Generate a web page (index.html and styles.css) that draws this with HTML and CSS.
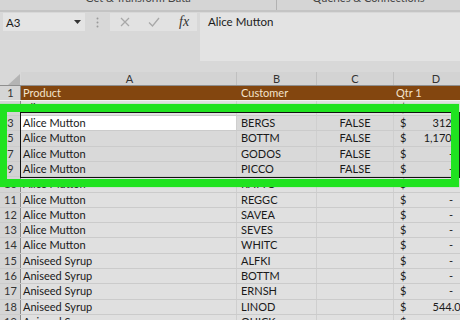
FILE: index.html
```html
<!DOCTYPE html>
<html>
<head>
    <title>Alice Mutton - Excel</title>
    <link rel="stylesheet" href="styles.css">
</head>
<body>
    <div class="ribbon">
        <div class="group group-get">Get &amp; Transform Data</div>
        <div class="group group-queries">Queries &amp; Connections</div>
    </div>

    <div class="fbar">
        <div class="namebox">
            <span>A3</span>
            <svg class="arrow" width="7" height="4" viewBox="0 0 7 4"><polygon points="0,0 7,0 3.5,4" fill="#333"/></svg>
        </div>
        <div class="dots">
            <svg width="3" height="11" viewBox="0 0 3 11"><circle cx="1.5" cy="1.5" r="1" fill="#9a9a9a"/><circle cx="1.5" cy="5.5" r="1" fill="#9a9a9a"/><circle cx="1.5" cy="9.5" r="1" fill="#9a9a9a"/></svg>
        </div>
        <div class="fxbtns">
            <svg class="btn" width="10" height="10" viewBox="0 0 10 10"><path d="M1 1 L9 9 M9 1 L1 9" stroke="#a8a8a8" stroke-width="1.3" fill="none"/></svg>
            <svg class="btn" width="12" height="10" viewBox="0 0 12 10"><path d="M1 5.5 L4.5 9 L11 1" stroke="#a8a8a8" stroke-width="1.3" fill="none"/></svg>
            <span class="fx">fx</span>
        </div>
        <div class="finput">Alice Mutton</div>
    </div>

    <div class="sheet">
        <div class="colhead">
            <div class="rh corner">
                <svg width="12" height="11" viewBox="0 0 12 11"><polygon points="12,0 12,11 0,11" fill="#b4b4b4"/></svg>
            </div>
            <div class="a">A</div>
            <div class="b">B</div>
            <div class="c">C</div>
            <div class="d">D</div>
        </div>

        <div class="row head">
            <div class="rh">1</div>
            <div class="a">Product</div>
            <div class="b">Customer</div>
            <div class="c"></div>
            <div class="d">Qtr 1</div>
        </div>
        <div class="row">
            <div class="rh">2</div>
            <div class="a">Alice Mutton</div>
            <div class="b">ANTON</div>
            <div class="c"></div>
            <div class="d money"><span>$</span><span class="dash">-</span></div>
        </div>
        <div class="row sel">
            <div class="rh">3</div>
            <div class="a active">Alice Mutton</div>
            <div class="b">BERGS</div>
            <div class="c">FALSE</div>
            <div class="d money"><span>$</span><span class="num">312.00</span></div>
        </div>
        <div class="row sel">
            <div class="rh">5</div>
            <div class="a">Alice Mutton</div>
            <div class="b">BOTTM</div>
            <div class="c">FALSE</div>
            <div class="d money"><span>$</span><span class="num">1,170.00</span></div>
        </div>
        <div class="row sel">
            <div class="rh">7</div>
            <div class="a">Alice Mutton</div>
            <div class="b">GODOS</div>
            <div class="c">FALSE</div>
            <div class="d money"><span>$</span><span class="dash">-</span></div>
        </div>
        <div class="row sel">
            <div class="rh">9</div>
            <div class="a">Alice Mutton</div>
            <div class="b">PICCO</div>
            <div class="c">FALSE</div>
            <div class="d money"><span>$</span><span class="dash">-</span></div>
        </div>
        <div class="row">
            <div class="rh">10</div>
            <div class="a">Alice Mutton</div>
            <div class="b">RATTC</div>
            <div class="c"></div>
            <div class="d money"><span>$</span><span class="dash">-</span></div>
        </div>
        <div class="row">
            <div class="rh">11</div>
            <div class="a">Alice Mutton</div>
            <div class="b">REGGC</div>
            <div class="c"></div>
            <div class="d money"><span>$</span><span class="dash">-</span></div>
        </div>
        <div class="row">
            <div class="rh">12</div>
            <div class="a">Alice Mutton</div>
            <div class="b">SAVEA</div>
            <div class="c"></div>
            <div class="d money"><span>$</span><span class="dash">-</span></div>
        </div>
        <div class="row">
            <div class="rh">13</div>
            <div class="a">Alice Mutton</div>
            <div class="b">SEVES</div>
            <div class="c"></div>
            <div class="d money"><span>$</span><span class="dash">-</span></div>
        </div>
        <div class="row">
            <div class="rh">14</div>
            <div class="a">Alice Mutton</div>
            <div class="b">WHITC</div>
            <div class="c"></div>
            <div class="d money"><span>$</span><span class="dash">-</span></div>
        </div>
        <div class="row">
            <div class="rh">15</div>
            <div class="a">Aniseed Syrup</div>
            <div class="b">ALFKI</div>
            <div class="c"></div>
            <div class="d money"><span>$</span><span class="dash">-</span></div>
        </div>
        <div class="row">
            <div class="rh">16</div>
            <div class="a">Aniseed Syrup</div>
            <div class="b">BOTTM</div>
            <div class="c"></div>
            <div class="d money"><span>$</span><span class="dash">-</span></div>
        </div>
        <div class="row">
            <div class="rh">17</div>
            <div class="a">Aniseed Syrup</div>
            <div class="b">ERNSH</div>
            <div class="c"></div>
            <div class="d money"><span>$</span><span class="dash">-</span></div>
        </div>
        <div class="row">
            <div class="rh">18</div>
            <div class="a">Aniseed Syrup</div>
            <div class="b">LINOD</div>
            <div class="c"></div>
            <div class="d money"><span>$</span><span class="num">544.00</span></div>
        </div>
        <div class="row">
            <div class="rh">19</div>
            <div class="a">Aniseed Syrup</div>
            <div class="b">QUICK</div>
            <div class="c"></div>
            <div class="d money"><span>$</span><span class="dash">-</span></div>
        </div>
    </div>

    <!-- selected range and the green marker drawn over it -->
    <div class="selection"></div>
    <div class="highlight"></div>
</body>
</html>
```

FILE: styles.css
```css
body {
    margin: 0;
    width: 460px;
    height: 320px;
    overflow: hidden;
    position: relative;
    background-color: #d8d8d8;
    font-family: Lato, "Liberation Sans", sans-serif;
    font-size: 11px;
    color: #1a1a1a;
}

.ribbon {
    display: flex;
    height: 10px;
    overflow: hidden;
    background-color: #d5d5d5;
    border-bottom: 2px solid #c4c4c4;
}

.group {
    text-align: center;
    line-height: 11px;
    margin-top: -8px;
    color: #444;
    white-space: nowrap;
}

.group-get {
    width: 281px;
    border-right: 1px solid #b2b2b2;
}

.group-queries {
    width: 186px;
}

.fbar {
    display: flex;
    align-items: flex-start;
    height: 60px;
    padding: 1px 0 0 3px;
    box-sizing: border-box;
}

.namebox {
    width: 82px;
    height: 18px;
    box-sizing: border-box;
    background-color: #e4e4e4;
    display: flex;
    align-items: center;
    justify-content: space-between;
    padding: 0 4px 0 3px;
    font-size: 11.5px;
}

.dots {
    width: 25px;
    height: 18px;
    display: flex;
    align-items: center;
    justify-content: center;
}

.fxbtns {
    width: 87px;
    height: 18px;
    background-color: #e2e2e2;
    display: flex;
    align-items: center;
    padding-left: 10px;
    box-sizing: border-box;
}

.fxbtns .btn {
    margin-right: 18px;
}

.fx {
    font-family: "Liberation Serif", serif;
    font-style: italic;
    font-size: 14px;
    color: #333;
    margin-left: 1px;
}

.finput {
    flex: 1;
    margin-left: 3px;
    height: 48px;
    background-color: #e3e3e3;
    padding: 2px 0 0 8px;
    box-sizing: border-box;
    font-size: 11.5px;
}

.sheet {
    width: 478px;
    background-color: #e0e0e0;
}

.colhead,
.row {
    display: flex;
}

.colhead {
    height: 13.5px;
    box-sizing: border-box;
    background-color: #d3d3d3;
    border-bottom: 1px solid #8f8f8f;
    line-height: 13px;
    color: #333;
}

.colhead > div {
    text-align: center;
}

.corner {
    display: flex;
    align-items: flex-end;
    justify-content: flex-end;
    padding-right: 1px;
}

.row {
    height: 15.3px;
    box-sizing: border-box;
    border-bottom: 1px solid #cbcbcb;
    line-height: 14px;
    white-space: nowrap;
}

.rh {
    width: 21px;
    flex-shrink: 0;
    box-sizing: border-box;
    background-color: #d5d5d5;
    border-right: 1px solid #8a8a8a;
    padding-left: 1px;
    text-align: center;
    color: #333;
}

.colhead .rh {
    border-right: none;
    background-color: #d8d8d8;
}

.a {
    width: 215px;
    padding-left: 2px;
    box-sizing: border-box;
}

.b {
    width: 80px;
    padding-left: 4px;
    box-sizing: border-box;
    border-left: 1px solid #cfcfcf;
}

.c {
    width: 77px;
    text-align: center;
    border-left: 1px solid #cfcfcf;
    box-sizing: border-box;
}

.d {
    width: 85px;
    padding-left: 2px;
    box-sizing: border-box;
    border-left: 1px solid #cfcfcf;
}

.colhead .b,
.colhead .c,
.colhead .d {
    border-left: 1px solid #c0c0c0;
    padding-left: 0;
}

.money {
    display: flex;
    justify-content: space-between;
    padding-left: 6px;
}

.num {
    padding-right: 11px;
}

.dash {
    padding-right: 25px;
}

.head {
    background-color: #83460f;
    color: #f3e3cc;
    border-bottom: 1px solid #f2f2f2;
}

.head .b,
.head .c,
.head .d {
    border-left-color: #83460f;
}

.head .rh {
    color: #333;
}

.sel {
    background-color: #d9d9d9;
}

.sel .rh {
    background-color: #d3d3d3;
}

.active {
    background-color: #fff;
}

.selection {
    position: absolute;
    left: 20px;
    top: 112px;
    width: 440px;
    height: 66px;
    box-sizing: border-box;
    border: 1px solid #111;
}

.highlight {
    position: absolute;
    left: 0;
    top: 104px;
    width: 459px;
    height: 83px;
    box-sizing: border-box;
    border-style: solid;
    border-color: #20e320;
    border-width: 8px 8px 8px 7px;
    box-shadow: 0 0 1px rgba(32, 227, 32, 0.6);
}
```
